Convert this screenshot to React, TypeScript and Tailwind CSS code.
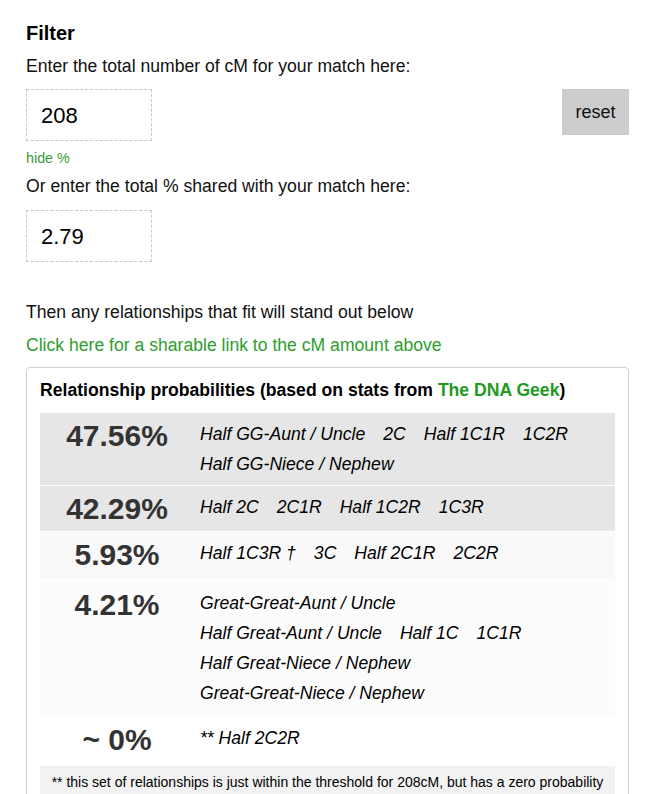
import React from 'react';

// ── Data ──────────────────────────────────────────────────────────────────────

type ProbRow = {
  pct: string;
  bg: string;
  pad: string;
  lines: string[][]; // each inner array is one visual line of items
};

const ROWS: ProbRow[] = [
  {
    pct: '47.56%',
    bg: 'bg-[#e6e6e6]',
    pad: 'pt-[6px] pb-[6px]',
    lines: [['Half GG-Aunt / Uncle', '2C', 'Half 1C1R', '1C2R'], ['Half GG-Niece / Nephew']],
  },
  {
    pct: '42.29%',
    bg: 'bg-[#e6e6e6]',
    pad: 'pt-[6px] pb-[5px]',
    lines: [['Half 2C', '2C1R', 'Half 1C2R', '1C3R']],
  },
  {
    pct: '5.93%',
    bg: 'bg-[#f9f9f9]',
    pad: 'pt-[6px] pb-[7px]',
    lines: [['Half 1C3R †', '3C', 'Half 2C1R', '2C2R']],
  },
  {
    pct: '4.21%',
    bg: 'bg-[#fcfcfc]',
    pad: 'pt-[8px] pb-[6px]',
    lines: [
      ['Great-Great-Aunt / Uncle'],
      ['Half Great-Aunt / Uncle', 'Half 1C', '1C1R'],
      ['Half Great-Niece / Nephew'],
      ['Great-Great-Niece / Nephew'],
    ],
  },
  {
    pct: '~ 0%',
    bg: 'bg-white',
    pad: 'pt-[8px] pb-[9px]',
    lines: [['** Half 2C2R']],
  },
];

// ── Sub-components ────────────────────────────────────────────────────────────

const DashedInput: React.FC<{ value: string }> = ({ value }) => (
  <div className="w-[126px] h-[52px] border border-dashed border-[#c8c8c8] flex items-center pl-[14px] text-[22px] text-black">
    {value}
  </div>
);

const Row: React.FC<{ row: ProbRow }> = ({ row }) => (
  <div className={`flex ${row.pad} ${row.bg}`}>
    <div className="w-[154px] shrink-0 text-center text-[30px] leading-[34px] font-bold text-[#333]">
      {row.pct}
    </div>
    <div className="pl-[6px] flex flex-col">
      {row.lines.map((line, i) => (
        <div key={i} className="flex gap-x-[18px] text-[17.6px] leading-[30px] italic text-black">
          {line.map(item => (
            <span key={item}>{item}</span>
          ))}
        </div>
      ))}
    </div>
  </div>
);

// ── Page ──────────────────────────────────────────────────────────────────────

export default function App() {
  return (
    <div className="min-h-[794px] bg-white font-['Liberation_Sans',Arial,sans-serif] text-[#111]">
      <div className="ml-[26px] w-[603px] pt-[22px]">
        <div className="text-[20px] leading-[22px] font-bold text-black">Filter</div>
        <div className="mt-[12px] text-[17.6px] leading-[20px]">
          Enter the total number of cM for your match here:
        </div>

        <div className="mt-[13px] flex justify-between items-start">
          <DashedInput value="208" />
          <button className="w-[67px] h-[46px] bg-[#cccccc] text-[18px] text-[#111]">reset</button>
        </div>

        <div className="mt-[9px] text-[14.3px] leading-[16px] text-[#3a9a3a]">hide %</div>
        <div className="mt-[10px] text-[17.6px] leading-[20px]">
          Or enter the total % shared with your match here:
        </div>
        <div className="mt-[14px]">
          <DashedInput value="2.79" />
        </div>

        <div className="mt-[40px] text-[17.6px] leading-[20px]">
          Then any relationships that fit will stand out below
        </div>
        <div className="mt-[13px] text-[17.6px] leading-[20px] text-[#2e9e2e]">
          Click here for a sharable link to the cM amount above
        </div>

        {/* Probability panel */}
        <div className="mt-[12px] border border-[#d0d0d0] rounded-[4px] px-[13px] pt-[12px]">
          <div className="text-[17.6px] leading-[20px] font-bold text-black">
            Relationship probabilities (based on stats from{' '}
            <span className="text-[#1f9a1f]">The DNA Geek</span>)
          </div>
          <div className="mt-[13px] flex flex-col gap-[1px]">
            {ROWS.map(r => (
              <Row key={r.pct} row={r} />
            ))}
          </div>
          <div className="bg-[#f2f2f2] px-[6px] pt-[8px] pb-[8px] text-center text-[14px] leading-[16px] text-black whitespace-nowrap">
            ** this set of relationships is just within the threshold for 208cM, but has a zero probability
          </div>
        </div>
      </div>
    </div>
  );
}
